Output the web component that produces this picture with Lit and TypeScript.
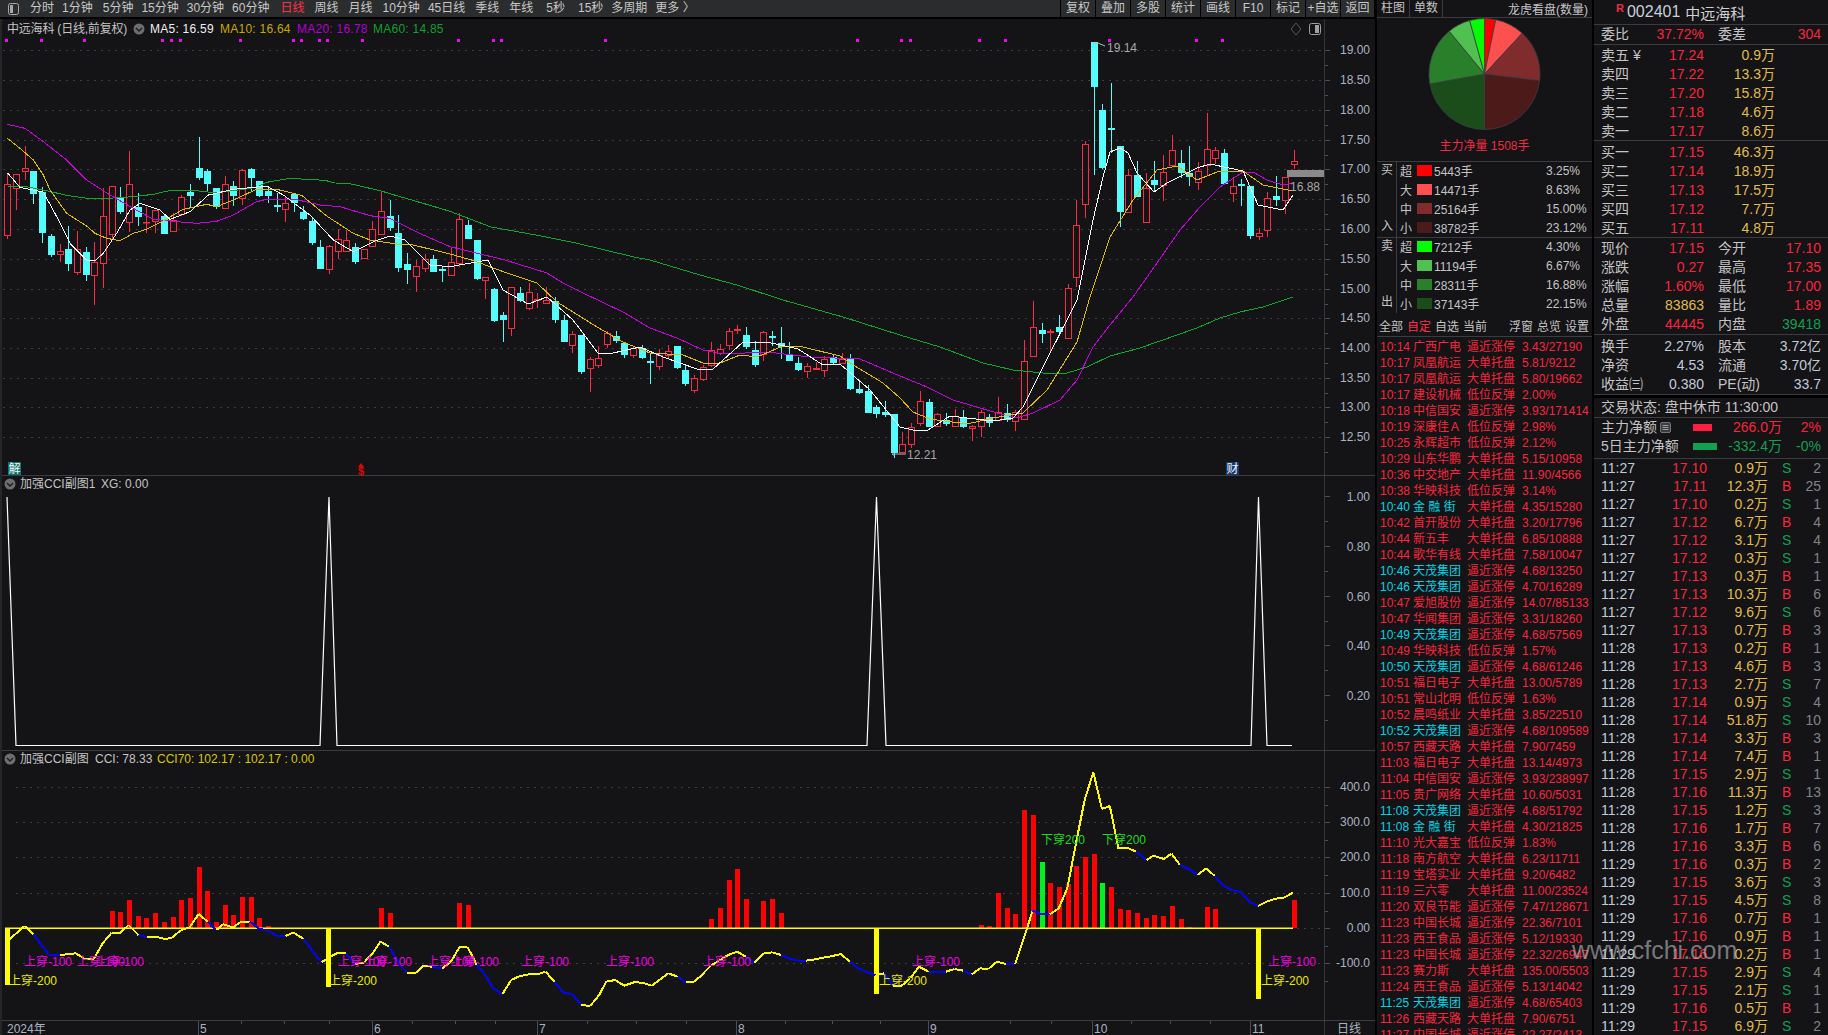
import { LitElement, html, css, svg } from "lit";
import { customElement } from "lit/decorators.js";

const X = (i: number) => Math.round(7.4 + 8.69 * i);

// [red?, wickTop, bodyTop, bodyBottom, wickBottom] in crop coordinates: y = base + v / 3
const A: number[][] = [
  [1,220,253,407,416],[1,222,223,268,330],[1,139,205,215,240],[0,213,213,281,312],[0,262,276,399,428],[0,403,408,465,470],
  [1,432,454,464,486],[0,378,447,491,513],[1,393,448,518,524],[0,441,456,525,543],[1,426,487,527,614],[1,265,349,491,563],
  [1,259,259,404,418],[0,262,291,335,342],[1,153,253,368,396],[0,280,321,351,378],[1,321,367,368,398],[1,331,331,365,399],
  [0,342,348,402,402],[1,340,360,395,395],[1,286,292,344,348],[0,252,276,288,325],[0,112,204,234,240],[0,207,213,252,275],
  [0,264,264,320,326],[1,228,253,326,326],[0,243,258,288,318],[1,208,211,296,315],[0,204,207,234,276],[0,243,243,288,291],
  [0,262,273,288,308],[0,279,316,317,336],[1,288,310,331,366],[0,280,283,309,336],[0,318,336,357,360],[0,351,363,429,435],
  [0,420,441,507,507],[1,436,438,509,522],[1,387,418,457,477],[1,390,421,455,455],[0,429,441,486,492],[1,447,448,476,476],
  [1,363,388,440,440],[1,276,334,404,404],[0,300,348,384,393],[0,345,399,503,516],[0,459,492,510,552],[1,480,499,530,576],
  [1,462,478,506,516],[0,465,477,516,516],[0,498,506,512,546],
];
const B: number[][] = [[1,248,262,276,276],[1,213,219,264,267],[0,220,225,239,239],[0,240,240,279,280]];
const C: number[][] = [
  [1,52,52,64,117],[0,85,87,183,187],[0,155,165,180,245],[1,82,82,206,228],[0,82,99,123,126],[1,69,97,146,149],
  [1,99,116,122,144],[1,82,121,131,131],[0,112,123,180,188],[0,165,180,246,246],[1,213,222,257,279],[0,225,225,336,342],
  [1,291,298,326,396],[1,258,295,318,323],[1,213,220,255,263],[0,213,228,243,249],[0,249,249,285,294],[1,258,264,288,294],
  [0,255,264,294,297],[0,279,303,304,372],[1,267,285,320,329],[1,255,273,288,294],[0,258,258,324,327],[0,312,330,372,378],
  [1,345,355,392,399],[1,315,322,359,363],[1,246,270,317,320],[1,252,267,282,285],[1,204,213,258,270],[1,195,207,213,222],
  [0,201,225,261,267],[0,243,270,315,321],[1,213,216,285,303],[0,213,229,234,258],[0,201,249,261,297],[0,246,282,303,303],
  [0,291,309,330,333],[1,309,318,335,354],[1,306,324,331,331],[1,288,297,332,351],[0,285,291,309,312],[1,279,297,312,312],
  [0,282,297,387,390],[0,363,387,399,402],[0,375,393,459,459],[0,435,441,462,474],[0,423,456,465,471],[0,462,462,579,595],
];
const D: number[][] = [
  [1,1205,1242,1269,1269],[1,1180,1192,1246,1255],[1,1083,1114,1182,1188],[0,1108,1117,1190,1192],[1,1148,1153,1190,1190],[0,1150,1170,1182,1188],
  [1,1137,1157,1190,1190],[0,1140,1161,1190,1193],[1,1186,1188,1196,1232],[1,1140,1147,1190,1220],[0,1152,1161,1178,1190],[1,1101,1145,1174,1174],
  [0,1122,1149,1170,1175],[1,1140,1145,1175,1202],[1,930,994,1170,1170],[1,813,892,980,980],[0,880,900,912,938],[1,898,904,910,970],
  [0,855,891,906,915],[1,762,775,928,928],[1,510,586,745,771],[1,333,343,526,564],[0,36,36,170,435],[0,222,240,414,418],
  [0,159,295,299,370],[0,348,348,545,590],[1,417,436,548,548],[0,393,435,501,501],[1,430,475,580,580],[0,393,450,465,483],
  [1,375,427,469,513],[1,315,361,409,411],[0,360,399,430,444],[0,348,429,441,468],[1,396,424,460,480],[1,249,358,409,435],
  [1,351,361,387,402],[0,357,369,462,465],[1,441,469,493,516],[0,447,462,464,528],[0,468,468,618,627],[1,594,610,620,630],
  [1,486,505,602,621],[0,438,498,510,528],[1,441,441,512,552],[1,360,394,404,417],
];
const candles: number[][] = [
  ...A.map((c) => [c[0], 100 + c[1] / 3, 100 + c[2] / 3, 100 + c[3] / 3, 100 + c[4] / 3]),
  ...B,
  ...C.map((c) => [c[0], 260 + c[1] / 3, 260 + c[2] / 3, 260 + c[3] / 3, 260 + c[4] / 3]),
  ...D.map((c) => [c[0], 30 + c[1] / 3, 30 + c[2] / 3, 30 + c[3] / 3, 30 + c[4] / 3]),
];

const zA = (p: number[]) => [p[0] / 3, 100 + p[1] / 3];
const chunk = (a: number[]) => { const r: number[][] = []; for (let i = 0; i < a.length; i += 2) r.push([a[i], a[i + 1]]); return r; };
const toPts = (p: number[][]) => p.map((q) => q.join(",")).join(" ");

const ma60 = toPts([
  ...chunk([22,258,80,260,130,270,200,286,270,296,340,294,400,290,460,283,512,271,580,271,640,278,700,272,770,262,800,247,870,235,920,238,975,241,1005,249,1045,250,1140,272,1200,290,1280,313,1350,334]).map(zA),
  ...chunk([491,227,536,235,576,243,634,257,650,260,700,275,737,285,783,300,843,317,900,335,940,347,983,363,1013,370,1043,373,1067,373,1087,367,1110,356,1140,348,1197,328,1220,318,1240,312,1263,307,1293,297]),
]);
const ma20 = toPts([
  ...chunk([22,73,75,85,130,125,200,180,260,240,330,285,400,325,460,358,530,365,590,370,650,364,700,345,770,305,800,298,890,299,960,315,1020,320,1110,347,1170,355,1270,405,1350,440]).map(zA),
  ...chunk([505,260,547,273,563,283,583,293,623,312,650,328,677,338,703,350,723,354,767,352,810,357,860,359,900,376,927,387,953,400,997,413,1017,418,1033,413,1060,400,1077,380,1093,347,1110,325,1133,297,1157,263,1180,230,1200,207,1220,187,1243,172,1253,172,1267,180,1283,185,1293,183]),
]);
const ma10 = toPts([
  ...chunk([22,115,60,145,100,180,130,225,150,270,200,340,260,378,285,400,320,415,360,422,400,400,440,388,490,362,550,328,620,313,650,320,700,300,770,268,830,268,905,286,980,348,1060,400,1110,420,1190,432,1240,435,1350,462]).map(zA),
  ...chunk([475,261,493,268,510,274,537,283,557,302,597,327,623,342,650,353,683,355,703,363,720,363,740,355,757,357,783,346,803,347,840,356,850,363,883,383,900,398,913,412,930,419,967,424,993,418,1023,413,1047,390,1077,342,1090,297,1110,237,1133,200,1157,170,1177,166,1190,175,1197,180,1217,172,1243,171,1263,185,1293,191]),
]);
const ma5 = toPts([
  ...chunk([22,218,60,262,130,276,170,350,210,430,260,480,285,482,310,460,350,400,390,330,420,310,480,330,510,358,570,335,625,285,700,268,800,258,850,285,930,345,1000,420,1060,455,1120,425,1170,408,1215,420,1290,495,1350,500]).map(zA),
  ...chunk([488,260,503,290,528,304,547,297,573,320,598,353,613,353,640,347,663,357,697,369,713,369,743,342,767,342,798,349,823,365,840,364,870,390,900,427,913,430,928,430,950,416,993,421,1013,418,1023,407,1040,373,1077,300,1093,220,1103,177,1110,152,1120,148,1128,153,1137,173,1154,192,1167,183,1197,168,1210,164,1243,171,1258,205,1283,210,1293,195]),
]);

const dots = [6,41,84,162,171,180,240,293,301,319,327,362,458,493,501,605,857,901,910,979,1005,1109,1196,1222];
const grid1 = [50,80,110,140,169,199,229,259,289,318,348,378,407,437];
const axis1 = ["19.00","18.50","18.00","17.50","17.00","16.50","16.00","15.50","15.00","14.50","14.00","13.50","13.00","12.50"];
const grid3: [number, string][] = [[787,"400.0"],[822,"300.0"],[857,"200.0"],[893,"100.0"],[928,"0.00"],[963,"-100.0"]];
const axis2: [number, string][] = [[496,"1.00"],[546,"0.80"],[596,"0.60"],[645,"0.40"],[695,"0.20"]];

const redBars: [number, number][] = [
  ...([513,516,480,528,534,519,546,531,480,474,381,453,546,495,525,471,471,534,558].map((v, k) => [12 + k, v]) as [number, number][]),
  [43,504],[44,519],[52,489],[53,495],
  ...([537,504,420,387,477].map((v, k) => [81 + k, v]) as [number, number][]),
  [87,483],[88,477],[89,519],
  ...([555,558,459,504,522,210,225,366,429,441,432,378,351,342,429,441,507,510,519,534,525,528,498,537,561].map((v, k) => [112 + k, v]) as [number, number][]),
  [138,501],[139,507],[148,480],
];
const greenBarIdx = new Set([119, 126]);

const cciA = chunk([22,597,55,558,75,583,110,645,135,645,170,640,190,657,210,657,230,610,250,578,270,578,288,555,310,585,330,592,348,590,370,597,386,593,405,570,425,562,445,522,465,545,485,570,500,553,522,562,540,545,560,545,581,566,600,572,620,588,640,588,657,577,680,597,700,632,720,667,740,650,755,640,775,640,795,672,815,668,835,640,852,605,872,620,895,675,912,698,932,698,948,678,968,680,990,686,1010,665,1030,620,1047,620,1068,675,1087,705,1105,745,1125,763,1145,720,1165,708,1185,703,1205,703,1222,695,1242,725,1262,758,1282,762,1302,795,1322,798,1342,765,1358,725,1378,720,1398,737,1420,727,1440,728,1460,737,1480,717,1497,700,1518,710,1536,727,1555,725]).map((p) => [p[0] / 2.24, 740 + p[1] / 3]);
const cciB = chunk([0,710,25,677,65,645,86,635,105,650,125,668,147,640,167,637,187,645,205,655,225,662,245,662,265,658,285,653,305,648,325,642,345,665,365,685,385,697,405,705,425,700,445,737,465,737,485,715,505,680,527,695,547,695,567,695,587,687,607,692,627,703,645,685,665,687,685,665,705,672,727,672,748,590,767,512,787,522,807,523,827,505,847,445,867,310,887,180,907,97,927,207,945,198,965,325,985,323,1005,335,1030,360,1045,347,1070,357,1087,341,1107,375,1127,387,1147,405,1167,385,1187,408,1205,435,1225,450,1247,456,1267,485,1287,498,1307,485,1327,476,1347,473,1367,458]).map((p) => [700 + p[0] / 2.306, 740 + p[1] / 3]);
const cci = [...cciA, ...cciB];
const blueRanges = [[33,60],[138,148],[207,217],[232,235],[250,286],[303,322],[346,355],[389,407],[432,442],[477,502],[554,581],[678,686],[745,754],[781,806],[850,876],[884,893],[928,946],[963,972],[1006,1015],[1032,1050],[1136,1147],[1180,1197],[1215,1258]];
const isBlue = (x: number) => blueRanges.some((r) => x >= r[0] && x <= r[1]);

const up100 = [24,77,96,338,364,427,451,521,606,703,912,1268];
const up200 = [9,329,879,1261];
const thick: [number, number][] = [[7,985],[328,987],[876,994],[1258,999]];
const minorTicks = [241,284,329,412,455,495,587,636,686,785,832,880,1010,1051,1131,1170,1210];
const months: [number, string][] = [[7,"2024年"],[198,"5"],[372,"6"],[537,"7"],[736,"8"],[928,"9"],[1092,"10"],[1250,"11"]];

const leftTabs: [string, string][] = [
  ["分时",""],["1分钟",""],["5分钟","m2"],["15分钟",""],["30分钟",""],["60分钟",""],["日线","on m3"],["周线","m2"],["月线","m2"],["10分钟","m2"],["45日线",""],["季线","m2"],["年线","m2"],["5秒","m5"],["15秒","m5"],["多周期",""],["更多 〉",""],
];
const rightTabs = ["复权","叠加","多股","统计","画线","F10","标记","+自选","返回"];

const pie: [number, string][] = [[3.25,"#ff0000"],[8.63,"#ff5050"],[15,"#802c2c"],[23.12,"#4d1a1a"],[22.15,"#1a4d1a"],[16.88,"#2a802a"],[6.67,"#50c050"],[4.3,"#00ff00"]];
const buyRows: [string, string, string, string][] = [["超","#ff0000","5443手","3.25%"],["大","#ff5050","14471手","8.63%"],["中","#802c2c","25164手","15.00%"],["小","#4d1a1a","38782手","23.12%"]];
const sellRows: [string, string, string, string][] = [["超","#00ff00","7212手","4.30%"],["大","#50c050","11194手","6.67%"],["中","#2a802a","28311手","16.88%"],["小","#1a4d1a","37143手","22.15%"]];

const T = "逼近涨停", H = "大单托盘", L = "低位反弹";
const list: [string, string, string, string, number][] = [
  ["10:14","广西广电",T,"3.43/27190",0],["10:17","凤凰航运",H,"5.81/9212",0],["10:17","凤凰航运",H,"5.80/19662",0],["10:17","建设机械",L,"2.00%",0],
  ["10:18","中信国安",T,"3.93/171414",0],["10:19","深康佳Ａ",L,"2.98%",0],["10:25","永辉超市",L,"2.12%",0],["10:29","山东华鹏",H,"5.15/10958",0],
  ["10:36","中交地产",H,"11.90/4566",0],["10:38","华映科技",L,"3.14%",0],["10:40","金 融 街",H,"4.35/15280",1],["10:42","首开股份",H,"3.20/17796",0],
  ["10:44","新五丰",H,"6.85/10888",0],["10:44","歌华有线",H,"7.58/10047",0],["10:46","天茂集团",T,"4.68/13250",1],["10:46","天茂集团",T,"4.70/16289",1],
  ["10:47","爱旭股份",T,"14.07/85133",0],["10:47","华闻集团",T,"3.31/18260",0],["10:49","天茂集团",T,"4.68/57569",1],["10:49","华映科技",L,"1.57%",0],
  ["10:50","天茂集团",T,"4.68/61246",1],["10:51","福日电子",H,"13.00/5789",0],["10:51","常山北明",L,"1.63%",0],["10:52","晨鸣纸业",H,"3.85/22510",0],
  ["10:52","天茂集团",T,"4.68/109589",1],["10:57","西藏天路",H,"7.90/7459",0],["11:03","福日电子",H,"13.14/4973",0],["11:04","中信国安",T,"3.93/238997",0],
  ["11:05","贵广网络",H,"10.60/5031",0],["11:08","天茂集团",T,"4.68/51792",1],["11:08","金 融 街",H,"4.30/21825",1],["11:10","光大嘉宝",L,"1.83%",0],
  ["11:18","南方航空",H,"6.23/11711",0],["11:19","宝塔实业",H,"9.20/6482",0],["11:19","三六零",H,"11.00/23524",0],["11:20","双良节能",T,"7.47/128671",0],
  ["11:23","中国长城",T,"22.36/7101",0],["11:23","西王食品",T,"5.12/19330",0],["11:23","中国长城",T,"22.32/26947",0],["11:23","赛力斯",H,"135.00/5503",0],
  ["11:24","西王食品",T,"5.13/14042",0],["11:25","天茂集团",T,"4.68/65403",1],["11:26","西藏天路",H,"7.90/6751",0],["11:27","中国长城",T,"22.27/2413",0],
];

const sell = [["卖五 ¥","17.24","0.9万"],["卖四","17.22","13.3万"],["卖三","17.20","15.8万"],["卖二","17.18","4.6万"],["卖一","17.17","8.6万"]];
const buy = [["买一","17.15","46.3万"],["买二","17.14","18.9万"],["买三","17.13","17.5万"],["买四","17.12","7.7万"],["买五","17.11","4.8万"]];
const stats = [
  ["现价","17.15","red","今开","17.10","red"],["涨跌","0.27","red","最高","17.35","red"],["涨幅","1.60%","red","最低","17.00","red"],
  ["总量","83863","gold","量比","1.89","red"],["外盘","44445","red","内盘","39418","green"],
];
const fund = [["换手","2.27%","股本","3.72亿"],["净资","4.53","流通","3.70亿"],["收益㈢","0.380","PE(动)","33.7"]];
const ticks: [string, string, string, string, number][] = [
  ["11:27","17.10","0.9","S",2],["11:27","17.11","12.3","B",25],["11:27","17.10","0.2","S",1],["11:27","17.12","6.7","B",4],["11:27","17.12","3.1","S",4],
  ["11:27","17.12","0.3","S",1],["11:27","17.13","0.3","B",1],["11:27","17.13","10.3","B",6],["11:27","17.12","9.6","S",6],["11:27","17.13","0.7","B",3],
  ["11:28","17.13","0.2","B",1],["11:28","17.13","4.6","B",3],["11:28","17.13","2.7","S",7],["11:28","17.14","0.9","S",4],["11:28","17.14","51.8","S",10],
  ["11:28","17.14","3.3","B",3],["11:28","17.14","7.4","B",1],["11:28","17.15","2.9","S",1],["11:28","17.16","11.3","B",13],["11:28","17.15","1.2","S",3],
  ["11:28","17.16","1.7","B",7],["11:28","17.16","3.3","B",6],["11:29","17.16","0.3","B",2],["11:29","17.15","3.6","S",3],["11:29","17.15","4.5","S",8],
  ["11:29","17.16","0.7","B",1],["11:29","17.16","0.9","B",1],["11:29","17.16","0.2","B",1],["11:29","17.15","2.9","S",4],["11:29","17.15","2.1","S",1],
  ["11:29","17.16","0.5","B",1],["11:29","17.15","6.9","S",2],
];

function piePaths(cx: number, cy: number, r: number) {
  let a = 0;
  return pie.map(([pct, col]) => {
    const a0 = (a / 100) * 2 * Math.PI;
    a += pct;
    const a1 = (a / 100) * 2 * Math.PI;
    const large = pct > 50 ? 1 : 0;
    const d = `M${cx},${cy}L${cx + r * Math.sin(a0)},${cy - r * Math.cos(a0)}A${r},${r} 0 ${large} 1 ${cx + r * Math.sin(a1)},${cy - r * Math.cos(a1)}Z`;
    return svg`<path d=${d} fill=${col} stroke="#3c3e44" stroke-width="0.8"></path>`;
  });
}

const chev = (x: number, y: number) => svg`<circle cx=${x} cy=${y} r="5.5" fill="#6e6e6e"></circle><polyline points="${x - 3},${y - 1} ${x},${y + 2} ${x + 3},${y - 1}" fill="none" stroke="#1c1c1c" stroke-width="1.4"></polyline>`;

function chart() {
  return svg`<svg class="chart" width="1375" height="1016" viewBox="0 19 1375 1016">
    ${grid1.map((y) => svg`<line class="grid" x1="3" x2="1324" y1=${y + 0.5} y2=${y + 0.5}></line>`)}
    ${grid3.map(([y]) => svg`<line class="grid" x1="16" x2="1324" y1=${y + 0.5} y2=${y + 0.5}></line>`)}
    <rect x="0" y="19" width="2" height="1016" fill="#24262a"></rect>
    <rect x="1324" y="19" width="1" height="1016" fill="#34363c"></rect>
    <rect x="2" y="475" width="1373" height="1" fill="#3a3c42"></rect>
    <rect x="2" y="750" width="1373" height="1" fill="#3a3c42"></rect>
    <rect x="2" y="1020" width="1373" height="1" fill="#3a3c42"></rect>

    ${grid1.flatMap((y, i) => [
      svg`<rect x="1325" y=${y} width="5" height="1" fill="#4a4d54"></rect>`,
      svg`<rect x="1325" y=${y + 15} width="3" height="1" fill="#4a4d54"></rect>`,
      svg`<text class="ax" x="1370" y=${y + 4} text-anchor="end">${axis1[i]}</text>`,
    ])}
    ${axis2.flatMap(([y, t]) => [
      svg`<rect x="1325" y=${y} width="5" height="1" fill="#4a4d54"></rect>`,
      svg`<rect x="1325" y=${y + 25} width="3" height="1" fill="#4a4d54"></rect>`,
      svg`<text class="ax" x="1370" y=${y + 5} text-anchor="end">${t}</text>`,
    ])}
    ${grid3.flatMap(([y, t]) => [
      svg`<rect x="1325" y=${y} width="5" height="1" fill="#4a4d54"></rect>`,
      svg`<rect x="1325" y=${y + 18} width="3" height="1" fill="#4a4d54"></rect>`,
      svg`<text class="ax" x="1370" y=${y + 4} text-anchor="end">${t}</text>`,
    ])}

    <text class="t tight" x="7" y="33">中远海科 (日线,前复权)</text>
    ${chev(139, 29)}
    <text class="t w loose" x="150" y="33">MA5: 16.59</text>
    <text class="t ma10 loose" x="220" y="33">MA10: 16.64</text>
    <text class="t ma20 loose" x="297" y="33">MA20: 16.78</text>
    <text class="t ma60 loose" x="373" y="33">MA60: 14.85</text>
    ${dots.map((x) => svg`<rect x=${x - 1} y="39" width="3" height="3" fill="#ff00ff"></rect>`)}
    <polygon points="1296,23 1301,29 1296,35 1291,29" fill="none" stroke="#55585e"></polygon>
    <rect x="1309.5" y="23.5" width="11" height="11" rx="2" fill="none" stroke="#a0a0a0"></rect>
    <rect x="1315" y="25" width="4" height="8" fill="#a0a0a0"></rect>

    ${candles.map((c, i) => {
      const x = X(i), wt = Math.round(c[1]), bt = Math.round(c[2]), bb = Math.round(c[3]), wb = Math.round(c[4]);
      if (c[0]) {
        return svg`<rect x=${x} y=${wt} width="1" height=${Math.max(wb - wt, 1)} fill="#ff2a44"></rect>
          <rect x=${x - 2.5} y=${bt + 0.5} width="6" height=${Math.max(bb - bt - 1, 0.5)} fill="#141316" stroke="#ff2a44"></rect>`;
      }
      return svg`<rect x=${x} y=${wt} width="1" height=${Math.max(wb - wt, 1)} fill="#54ffff"></rect>
        <rect x=${x - 3} y=${bt} width="7" height=${Math.max(bb - bt, 2)} fill="#54ffff"></rect>`;
    })}
    <polyline class="ln" points=${ma60} stroke="#10a828"></polyline>
    <polyline class="ln" points=${ma20} stroke="#c800e0"></polyline>
    <polyline class="ln" points=${ma10} stroke="#e0bc00"></polyline>
    <polyline class="ln" points=${ma5} stroke="#ffffff"></polyline>

    <polyline points="1093,44 1098,43 1105,46" fill="none" stroke="#b8b8b8"></polyline>
    <text class="t grey" x="1107" y="52">19.14</text>
    <polyline points="895,456 892,454 906,454" fill="none" stroke="#b8b8b8"></polyline>
    <text class="t grey" x="907" y="459">12.21</text>
    <rect x="1287" y="170" width="37" height="7" fill="#8a8a8a"></rect>
    <text class="t grey" x="1290" y="191">16.88</text>

    <rect x="8" y="462" width="13" height="13" fill="#0a7272"></rect>
    <text class="t white" x="8.5" y="473">解</text>
    <polygon points="361,463 358,467 364,467" fill="#e80000"></polygon>
    <text class="dollar" x="361" y="475" text-anchor="middle">$</text>
    <rect x="1226" y="462" width="13" height="13" fill="#103a70"></rect>
    <text class="t white" x="1226.5" y="473">财</text>

    ${chev(10, 484)}
    <text class="t" x="20" y="488">加强CCI副图1</text>
    <text class="t" x="101" y="488">XG: 0.00</text>
    <polyline class="spike" points="7,497 16,745.5 320,745.5 329,497 337,745.5 867,745.5 876.5,497 886,745.5 1251,745.5 1258.5,497 1267,745.5 1292,745.5"></polyline>

    ${chev(10, 759)}
    <text class="t" x="20" y="763">加强CCI副图</text>
    <text class="t" x="95" y="763">CCI: 78.33</text>
    <text class="t y" x="157" y="763">CCI70: 102.17 : 102.17 : 0.00</text>

    ${redBars.map(([i, v]) => {
      const top = Math.round(740 + v / 3);
      return svg`<rect x=${X(i) - 2} y=${top} width="5" height=${928 - top} fill=${greenBarIdx.has(i) ? "#00f020" : "#ff0000"}></rect>`;
    })}
    ${thick.map(([x, b]) => svg`<rect x=${x - 2} y="928" width="5" height=${b - 928} fill="#ffff00"></rect>`)}
    <rect x="5" y="927.5" width="1288" height="1.5" fill="#ffff00"></rect>
    ${cci.slice(1).map((p, i) => {
      const q = cci[i];
      return svg`<line class="cci" x1=${q[0]} y1=${q[1]} x2=${p[0]} y2=${p[1]} stroke=${isBlue((p[0] + q[0]) / 2) ? "#0000ff" : "#ffff00"}></line>`;
    })}
    ${up100.map((x) => svg`<text class="t mag" x=${x} y="966">上穿-100</text>`)}
    ${up200.map((x) => svg`<text class="t yy" x=${x} y="985">上穿-200</text>`)}
    <text class="t grn" x="1041" y="844">下穿200</text>
    <text class="t grn" x="1102" y="844">下穿200</text>

    ${months.flatMap(([x, t]) => [
      x > 10 ? svg`<rect x=${x} y="1021" width="1" height="14" fill="#4a4d54"></rect>` : svg``,
      svg`<text class="t ax" x=${x + (x > 10 ? 2 : 0)} y="1033">${t}</text>`,
    ])}
    ${minorTicks.map((x) => svg`<rect x=${x} y="1021" width="1" height="3" fill="#4a4d54"></rect>`)}
    <text class="t ax" x="1349" y="1033" text-anchor="middle">日线</text>
  </svg>`;
}

@customElement("app-root")
export class AppRoot extends LitElement {
  static styles = css`
    :host {
      display: block;
      width: 1828px;
      height: 1035px;
      overflow: hidden;
      background: #000;
      font: 12px "Liberation Sans", "Noto Sans CJK SC", sans-serif;
      color: #c4c4c4;
    }
    .root { display: flex; width: 1828px; height: 1035px; position: relative; overflow: hidden; gap: 2px; }
    .col1 { width: 1375px; flex: none; display: flex; flex-direction: column; }
    .col2 { width: 215px; flex: none; display: flex; flex-direction: column; }
    .col3 { width: 234px; flex: none; display: flex; flex-direction: column; }

    .toolbar { height: 17px; background: #2b2c2e; display: flex; justify-content: space-between; margin-bottom: 2px; flex: none; }
    .tleft { display: flex; align-items: center; gap: 8px; padding-left: 8px; }
    .ticon { margin-right: 3px; display: block; }
    .tab { line-height: 17px; color: #c8c8c8; white-space: nowrap; }
    .tab.on { color: #ff3044; }
    .m2 { margin-left: 2px; }
    .m3 { margin-left: 3px; }
    .m5 { margin-left: 5px; }
    .tright { display: flex; }
    .tcell { width: 35px; text-align: center; line-height: 17px; border-left: 1px solid #000; box-sizing: border-box; color: #c8c8c8; white-space: nowrap; }
    .tcell:last-child { border-right: 1px solid #000; }

    .chart { display: block; background: #141316; }
    .grid { stroke: #3c3e42; stroke-dasharray: 2 5; }
    .ln { fill: none; stroke-width: 1; shape-rendering: crispEdges; }
    .cci { stroke-width: 2; shape-rendering: crispEdges; }
    .spike { fill: none; stroke: #ffffff; stroke-width: 1.2; }
    text { font: 12px "Liberation Sans", "Noto Sans CJK SC", sans-serif; }
    .t { fill: #c4c4c4; }
    .tight { letter-spacing: -0.2px; }
    .loose { letter-spacing: 0.25px; }
    .ax { fill: #a9b4c0; }
    .w { fill: #f0f0f0; }
    .ma10 { fill: #c8a800; }
    .ma20 { fill: #b000d0; }
    .ma60 { fill: #10a030; }
    .grey { fill: #a8a8a8; }
    .white { fill: #f4f4f4; }
    .y { fill: #d8c800; }
    .yy { fill: #e8e800; }
    .mag { fill: #f000e0; }
    .grn { fill: #20d820; }
    .dollar { fill: #e80000; font-weight: bold; font-size: 11px; }

    .panel { background: #141316; }
    .phead { height: 18px; box-sizing: border-box; border-bottom: 1px solid #3a3c42; display: flex; align-items: center; flex: none; }
    .pcell { width: 33px; box-sizing: border-box; border-right: 1px solid #3a3c42; text-align: center; height: 17px; line-height: 17px; }
    .pright { margin-left: auto; padding-right: 4px; }
    .piebox { height: 144px; box-sizing: border-box; border-bottom: 1px solid #3a3c42; display: flex; flex-direction: column; align-items: center; flex: none; }
    .piebox svg { display: block; }
    .pietext { color: #f02c40; margin-top: 8px; line-height: 14px; }
    .group { display: flex; flex: none; box-sizing: border-box; }
    .g1 { height: 76px; border-bottom: 1px solid #3a3c42; }
    .g2 { height: 75px; margin-bottom: 2px; }
    .side { width: 20px; box-sizing: border-box; border-right: 1px solid #3a3c42; display: flex; flex-direction: column; justify-content: space-between; padding-left: 4px; flex: none; height: 75px; }
    .side span { line-height: 17px; height: 19px; display: block; }
    .rows { flex: 1; }
    .sr { height: 19px; box-sizing: border-box; padding-bottom: 2px; display: flex; align-items: center; padding-left: 3px; }
    .sr .k { width: 17px; }
    .sw { width: 15px; height: 11px; margin-right: 2px; flex: none; }
    .sr .v { width: 112px; }
    .tabsbar { height: 22px; box-sizing: border-box; border-bottom: 1px solid #3a3c42; display: flex; align-items: center; gap: 4px; padding: 0 3px 0 2px; flex: none; }
    .tabsbar .on { color: #ff3044; }
    .tabsbar .push { margin-left: auto; }
    .list { flex: 1; overflow: hidden; padding: 2px 0 0 3px; min-height: 0; }
    .lr { display: grid; grid-template-columns: 33px 54px 55px auto; height: 16px; line-height: 16px; color: #f8263c; white-space: nowrap; overflow: hidden; }
    .lr .c { color: #00d4e4; }

    .c3 { font-size: 14px; }
    .head { height: 25px; box-sizing: border-box; border-bottom: 1px solid #3a3c42; display: flex; align-items: center; padding-left: 22px; flex: none; }
    .head .r { color: #f02c40; font-weight: bold; font-size: 11px; align-self: flex-start; margin: 2px 3px 0 0; }
    .head .code { font-size: 16px; color: #c8d0d8; margin-right: 5px; }
    .head .name { font-size: 15px; color: #d0d0d0; }
    .kv5 { display: grid; grid-template-columns: 40px 63px 14px 40px 63px; height: 19px; line-height: 19px; padding-left: 7px; white-space: nowrap; }
    .kv3 { display: grid; grid-template-columns: 40px 63px 71px; height: 19px; line-height: 19px; padding-left: 7px; white-space: nowrap; }
    .sec { box-sizing: border-box; border-bottom: 1px solid #3a3c42; flex: none; }
    .s20 { height: 20px; }
    .s96 { height: 96px; padding-top: 1px; }
    .s97 { height: 97px; padding-top: 1px; }
    .s97b { height: 97px; padding-top: 2px; }
    .s60 { height: 60px; padding-top: 2px; }
    .gap3 { height: 3px; background: #000; flex: none; }
    .status { height: 20px; line-height: 19px; padding-left: 7px; }
    .net { height: 41px; }
    .nr { display: grid; grid-template-columns: 92px 24px 65px 39px; padding-left: 7px; height: 19px; line-height: 19px; align-items: center; white-space: nowrap; }
    .nr .lab { display: flex; align-items: center; gap: 3px; }
    .nbar { height: 7px; }
    .ticks { flex: 1; overflow: hidden; padding-top: 0; min-height: 0; }
    .tr { display: grid; grid-template-columns: 40px 66px 61px 28px 25px; padding-left: 7px; height: 18px; line-height: 18px; white-space: nowrap; }
    .ar { text-align: right; }
    .red { color: #f8263c; }
    .gold { color: #e0bc50; }
    .green { color: #10a050; }
    .lt { color: #c0ccd8; }
    .dim { color: #808488; }
    .bs { padding-left: 14px; }
    .watermark { position: absolute; left: 1572px; top: 936px; font: 25px "Liberation Sans", sans-serif; color: rgba(190, 190, 190, 0.6); white-space: nowrap; pointer-events: none; }
  `;

  render() {
    return html`<div class="root">
      <div class="col1">
        <div class="toolbar">
          <div class="tleft">
            <svg class="ticon" width="11" height="12" viewBox="0 0 11 12"><rect x="0.5" y="0.5" width="10" height="11" rx="2" fill="none" stroke="#a8a8a8"></rect><rect x="2" y="2" width="3" height="8" fill="#a8a8a8"></rect></svg>
            ${leftTabs.map(([t, c]) => html`<span class="tab ${c}">${t}</span>`)}
          </div>
          <div class="tright">${rightTabs.map((t) => html`<span class="tcell">${t}</span>`)}</div>
        </div>
        ${chart()}
      </div>

      <div class="col2 panel">
        <div class="phead"><span class="pcell">柱图</span><span class="pcell">单数</span><span class="pright">龙虎看盘(数量)</span></div>
        <div class="piebox">
          <svg width="116" height="113" viewBox="0 0 116 113">${piePaths(57.5, 56, 55.5)}</svg>
          <div class="pietext">主力净量 1508手</div>
        </div>
        ${this.group("g1", "买", "入", buyRows)}
        ${this.group("g2", "卖", "出", sellRows)}
        <div class="tabsbar">
          <span>全部</span><span class="on">自定</span><span>自选</span><span>当前</span>
          <span class="push">浮窗</span><span>总览</span><span>设置</span>
        </div>
        <div class="list">
          ${list.map((r) => html`<div class="lr"><span class=${r[4] ? "c" : ""}>${r[0]}</span><span class=${r[4] ? "c" : ""}>${r[1]}</span><span>${r[2]}</span><span>${r[3]}</span></div>`)}
        </div>
      </div>

      <div class="col3 panel c3">
        <div class="head"><span class="r">R</span><span class="code">002401</span><span class="name">中远海科</span></div>
        <div class="sec s20 kv5"><span>委比</span><span class="ar red">37.72%</span><span></span><span>委差</span><span class="ar red">304</span></div>
        <div class="sec s96">${sell.map((r) => this.quote(r))}</div>
        <div class="sec s97b">${buy.map((r) => this.quote(r))}</div>
        <div class="sec s97">
          ${stats.map((r) => html`<div class="kv5"><span>${r[0]}</span><span class="ar ${r[2]}">${r[1]}</span><span></span><span>${r[3]}</span><span class="ar ${r[5]}">${r[4]}</span></div>`)}
        </div>
        <div class="sec s60">
          ${fund.map((r) => html`<div class="kv5"><span>${r[0]}</span><span class="ar lt">${r[1]}</span><span></span><span>${r[2]}</span><span class="ar lt">${r[3]}</span></div>`)}
        </div>
        <div class="gap3"></div>
        <div class="sec status">交易状态: 盘中休市 11:30:00</div>
        <div class="sec net">
          <div class="nr">
            <span class="lab">主力净额<svg width="11" height="11" viewBox="0 0 11 11"><rect x="0.5" y="0.5" width="10" height="10" rx="1.5" fill="#3a3c40" stroke="#70747a"></rect><path d="M2.5 3.5h6M2.5 5.5h6M2.5 7.5h6" stroke="#9a9ea4"></path></svg></span>
            <span><div class="nbar" style="width:19px;background:#ff2040"></div></span>
            <span class="ar red">266.0万</span><span class="ar red">2%</span>
          </div>
          <div class="nr">
            <span class="lab">5日主力净额</span>
            <span><div class="nbar" style="width:24px;background:#10a050"></div></span>
            <span class="ar green">-332.4万</span><span class="ar green">-0%</span>
          </div>
        </div>
        <div class="ticks">
          ${ticks.map((t) => html`<div class="tr">
            <span class="lt">${t[0]}</span><span class="ar red">${t[1]}</span><span class="ar gold">${t[2]}万</span>
            <span class="bs ${t[3] === "B" ? "red" : "green"}">${t[3]}</span><span class="ar dim">${t[4]}</span>
          </div>`)}
        </div>
      </div>
      <div class="watermark">www.cfchi.com</div>
    </div>`;
  }

  private group(cls: string, a: string, b: string, rows: [string, string, string, string][]) {
    return html`<div class="group ${cls}">
      <div class="side"><span>${a}</span><span>${b}</span></div>
      <div class="rows">
        ${rows.map((r) => html`<div class="sr"><span class="k">${r[0]}</span><span class="sw" style="background:${r[1]}"></span><span class="v">${r[2]}</span><span>${r[3]}</span></div>`)}
      </div>
    </div>`;
  }

  private quote(r: string[]) {
    return html`<div class="kv3"><span>${r[0]}</span><span class="ar red">${r[1]}</span><span class="ar gold">${r[2]}</span></div>`;
  }
}
